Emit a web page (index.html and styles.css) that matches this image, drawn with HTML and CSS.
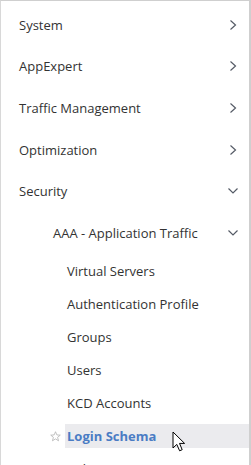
FILE: index.html
```html
<!DOCTYPE html>
<html>
<head>
<meta charset="utf-8">
<link rel="stylesheet" href="styles.css">
</head>
<body>
<nav class="panel">
  <ul class="menu">
    <li class="top"><span>System</span><svg class="chev" viewBox="0 0 8 12"><path d="M1.5 1.5 L6.5 6 L1.5 10.5" /></svg></li>
    <li class="top"><span>AppExpert</span><svg class="chev" viewBox="0 0 8 12"><path d="M1.5 1.5 L6.5 6 L1.5 10.5" /></svg></li>
    <li class="top"><span>Traffic Management</span><svg class="chev" viewBox="0 0 8 12"><path d="M1.5 1.5 L6.5 6 L1.5 10.5" /></svg></li>
    <li class="top"><span>Optimization</span><svg class="chev" viewBox="0 0 8 12"><path d="M1.5 1.5 L6.5 6 L1.5 10.5" /></svg></li>
    <li class="top"><span>Security</span><svg class="chev down" viewBox="0 0 12 8"><path d="M1.5 1.5 L6 6 L10.5 1.5" /></svg></li>
    <li class="top sub"><span>AAA - Application Traffic</span><svg class="chev down" viewBox="0 0 12 8"><path d="M1.5 1.5 L6 6 L10.5 1.5" /></svg></li>
  </ul>
  <ul class="leaves">
    <li class="leaf"><a>Virtual Servers</a></li>
    <li class="leaf"><a>Authentication Profile</a></li>
    <li class="leaf"><a>Groups</a></li>
    <li class="leaf"><a>Users</a></li>
    <li class="leaf"><a>KCD Accounts</a></li>
    <li class="leaf active"><svg class="star" viewBox="0 0 12 12"><path d="M6 0.8 L7.5 4.3 L11.2 4.5 L8.3 6.9 L9.3 10.7 L6 8.6 L2.7 10.7 L3.7 6.9 L0.8 4.5 L4.5 4.3 Z"/></svg><a>Login Schema</a></li>
    <li class="leaf"><a>Policies</a></li>
  </ul>
  <svg class="cursor" viewBox="0 0 14 22"><path d="M1 1 L1 17 L4.8 13.4 L7.6 19.8 L10.2 18.7 L7.5 12.4 L12.6 12.4 Z"/></svg>
</nav>
</body>
</html>
```
FILE: styles.css
```css
html, body {
  margin: 0;
  padding: 0;
  background: #fff;
}
body {
  font-family: "Open Sans", "Noto Sans", sans-serif;
  font-size: 13px;
  color: #333;
  overflow: hidden;
  height: 465px;
}
.panel {
  position: relative;
  box-sizing: border-box;
  width: 251px;
  height: 600px;
  border-top: 1px solid #cfcfcf;
  border-left: 1px solid #d8d8d8;
  border-right: 2px solid #cfcfcf;
  padding-top: 3px;
}
.menu, .leaves {
  list-style: none;
  margin: 0;
  padding: 0;
}
.top {
  display: flex;
  align-items: center;
  justify-content: space-between;
  height: 41.6px;
  padding: 0 12px 0 18px;
}
.top.sub {
  padding-left: 52px;
}
.chev {
  width: 8px;
  height: 12px;
  fill: none;
  stroke: #555b66;
  stroke-width: 1.2;
}
.chev.down {
  width: 12px;
  height: 8px;
  margin-right: -2px;
}
.leaves {
  padding-top: 1px;
}
.leaf {
  display: flex;
  align-items: center;
  height: 33px;
  padding-left: 64px;
  position: relative;
}
.leaf a {
  display: flex;
  align-items: center;
  height: 24px;
  flex: 1;
  padding-left: 2px;
}
.leaf.active a {
  background: #ebebee;
  color: #4a7cc4;
  font-weight: 700;
}
.star {
  position: absolute;
  left: 49px;
  top: 11px;
  width: 11px;
  height: 11px;
  fill: none;
  stroke: #b5b5b5;
  stroke-width: 0.9;
}
.cursor {
  position: absolute;
  left: 171px;
  top: 430px;
  width: 14px;
  height: 22px;
  fill: #fff;
  stroke: #000;
  stroke-width: 1;
}
```
